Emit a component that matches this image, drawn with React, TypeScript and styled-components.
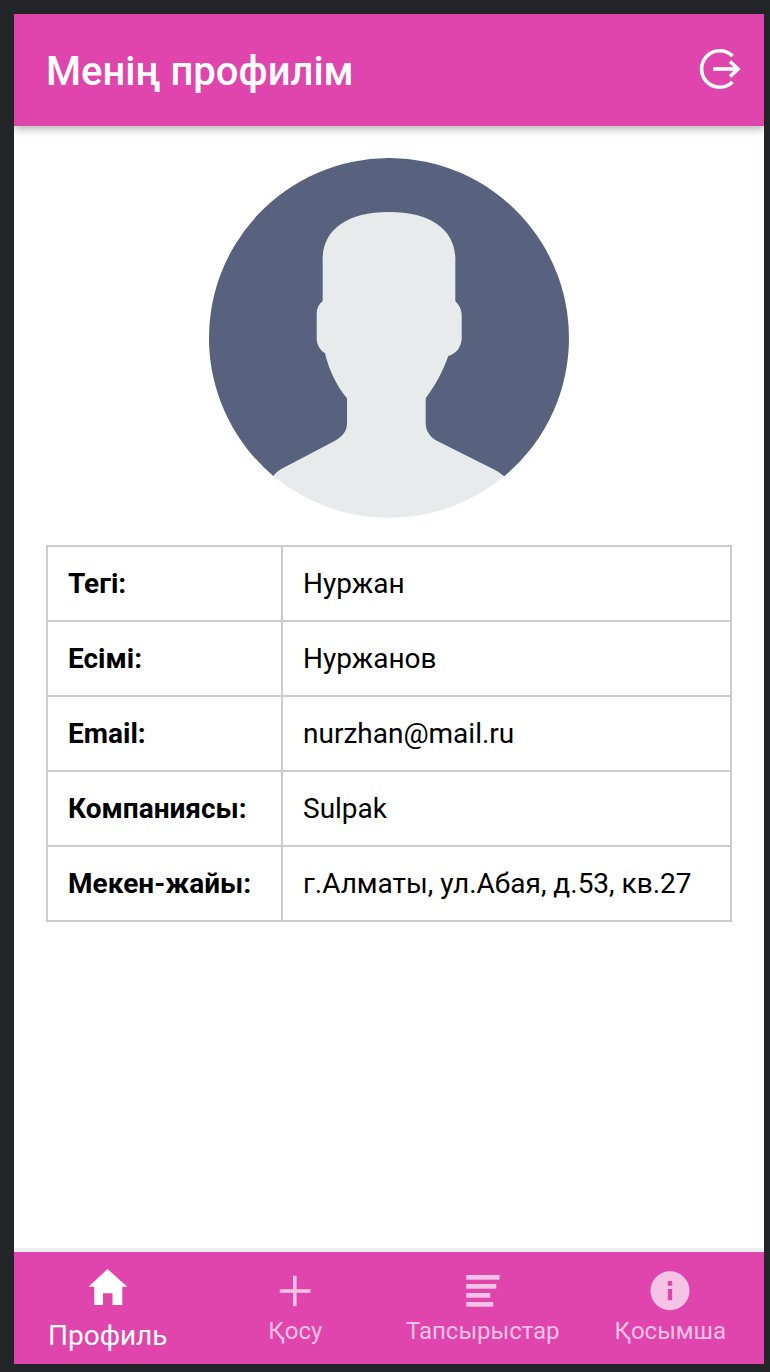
import React from 'react';
import styled, { createGlobalStyle } from 'styled-components';

const Global = createGlobalStyle`
  html, body { margin: 0; padding: 0; background: #242528; }
  body { font-family: Roboto, "Noto Sans", sans-serif; overflow: hidden; }
`;

const Screen = styled.div`
  box-sizing: border-box;
  width: 770px;
  height: 1372px;
  padding: 14px 6px 8px 14px;
  display: flex;
`;

const Phone = styled.div`
  flex: 1;
  display: flex;
  flex-direction: column;
  background: #fff;
  overflow: hidden;
`;

const Header = styled.header`
  position: relative;
  z-index: 1;
  flex: none;
  height: 112px;
  box-sizing: border-box;
  padding: 0 23px 0 32px;
  display: flex;
  align-items: center;
  justify-content: space-between;
  background: #e045ad;
  box-shadow: 0 3px 8px rgba(0, 0, 0, 0.3);
`;

const Title = styled.h1`
  margin: 3px 0 0;
  font-size: 40px;
  line-height: 1;
  font-weight: 500;
  color: #fff;
`;

const LogoutButton = styled.button`
  display: flex;
  padding: 0;
  border: 0;
  background: none;
`;

const Content = styled.main`
  flex: 1;
  display: flex;
  flex-direction: column;
  align-items: center;
  padding: 32px 32px 0;
`;

const Avatar = styled.svg`
  flex: none;
  width: 360px;
  height: 360px;
  margin-left: -1px;
  display: block;
`;

const InfoTable = styled.table`
  margin-top: 27px;
  width: 686px;
  border-collapse: collapse;
  table-layout: fixed;
  border: 2px solid #ccc;
`;

const Row = styled.tr`
  height: 75px;
`;

const Label = styled.th`
  width: 235px;
  box-sizing: border-box;
  padding: 0 0 0 20px;
  border: 2px solid #ccc;
  text-align: left;
  font-size: 28px;
  font-weight: 700;
  color: #000;
  white-space: nowrap;
`;

const Value = styled.td`
  padding: 0 0 0 20px;
  border: 2px solid #ccc;
  font-size: 28px;
  color: #000;
  white-space: nowrap;
`;

const TabBar = styled.nav`
  flex: none;
  height: 116px;
  box-sizing: border-box;
  border-top: 4px solid #eeeeee;
  display: grid;
  grid-template-columns: repeat(4, 1fr);
  background-clip: padding-box;
  background-color: #e045ad;
`;

const Tab = styled.div<{ $active?: boolean }>`
  display: flex;
  flex-direction: column;
  align-items: center;
  padding-top: 16px;
  color: ${p => (p.$active ? '#fff' : 'rgba(255,255,255,0.68)')};
`;

const TabIcon = styled.svg`
  display: block;
  width: 40px;
  height: 44px;
  flex: none;
`;

const TabLabel = styled.span<{ $active?: boolean }>`
  margin-top: ${p => (p.$active ? '6px' : '4px')};
  font-size: ${p => (p.$active ? '28px' : '24px')};
  line-height: ${p => (p.$active ? '36px' : '31px')};
  white-space: nowrap;
`;

const rows: [string, string][] = [
  ['Тегі:', 'Нуржан'],
  ['Есімі:', 'Нуржанов'],
  ['Email:', 'nurzhan@mail.ru'],
  ['Компаниясы:', 'Sulpak'],
  ['Мекен-жайы:', 'г.Алматы, ул.Абая, д.53, кв.27'],
];

export default function App() {
  return (
    <Screen>
      <Global />
      <Phone>
        <Header>
          <Title>Менің профилім</Title>
          <LogoutButton aria-label="Шығу">
            <svg width="44" height="44" viewBox="0 0 44 44" fill="none" stroke="#fff" strokeWidth="3.6">
              <path d="M35.5 8A18.2 18.2 0 1 0 35.5 34" />
              <path d="M16.3 21H40" />
              <path d="M33 13.5L41 21L33 28.5" />
            </svg>
          </LogoutButton>
        </Header>
        <Content>
          <Avatar viewBox="0 0 360 360">
            <path fill="#58627e" d="M295.3 318.2A180 180 0 1 0 64.3 317.9Z" />
            <path
              fill="#e8ebec"
              d="M113.7 105C112 74 135 54 180 54C225 54 248 74 246.3 105V143C250.5 147 252.7 152 252.7 157V180C252.7 189 247 196 239.3 198C234 213 226 228 216.7 240.3V265C216.7 273 221 279 228.3 283L286 312C289 313.5 292 316 295.3 318.2A180 180 0 0 1 64.3 317.9C67 314.5 70 312 73.7 310.3L126 282.7C134 278 138 273 138 265V240.3C127 227 120 212 116 195.3C111 192 107.7 187 107.7 180V155C107.7 150 110 146 113.7 143Z"
            />
          </Avatar>
          <InfoTable>
            <tbody>
              {rows.map(([k, v]) => (
                <Row key={k}>
                  <Label>{k}</Label>
                  <Value>{v}</Value>
                </Row>
              ))}
            </tbody>
          </InfoTable>
        </Content>
        <TabBar>
          <Tab $active>
            <TabIcon viewBox="0 0 40 44" fill="currentColor">
              <path d="M19.55 1L39.25 18.7H34.25V37H24.5V25.3H15V37H6.25V18.7H0.55Z" />
            </TabIcon>
            <TabLabel $active>Профиль</TabLabel>
          </Tab>
          <Tab>
            <TabIcon viewBox="0 0 40 44" fill="currentColor">
              <path d="M18 7.7H21.6V21.2H35.5V24.8H21.6V38.3H18V24.8H4.75V21.2H18Z" />
            </TabIcon>
            <TabLabel>Қосу</TabLabel>
          </Tab>
          <Tab>
            <TabIcon viewBox="0 0 40 44" fill="currentColor">
              <rect x="3.25" y="7" width="33.3" height="4.7" />
              <rect x="3.25" y="16" width="30" height="4.7" />
              <rect x="3.25" y="25" width="24" height="4.7" />
              <rect x="3.25" y="34" width="27" height="4.7" />
            </TabIcon>
            <TabLabel>Тапсырыстар</TabLabel>
          </Tab>
          <Tab>
            <TabIcon viewBox="0 0 40 44" fill="currentColor">
              <path
                fillRule="evenodd"
                d="M20 3.2A19.5 19.5 0 1 1 20 42.2A19.5 19.5 0 1 1 20 3.2ZM17.8 13V17.8H22.2V13ZM17.8 21V32.2H22.2V21Z"
              />
            </TabIcon>
            <TabLabel>Қосымша</TabLabel>
          </Tab>
        </TabBar>
      </Phone>
    </Screen>
  );
}
